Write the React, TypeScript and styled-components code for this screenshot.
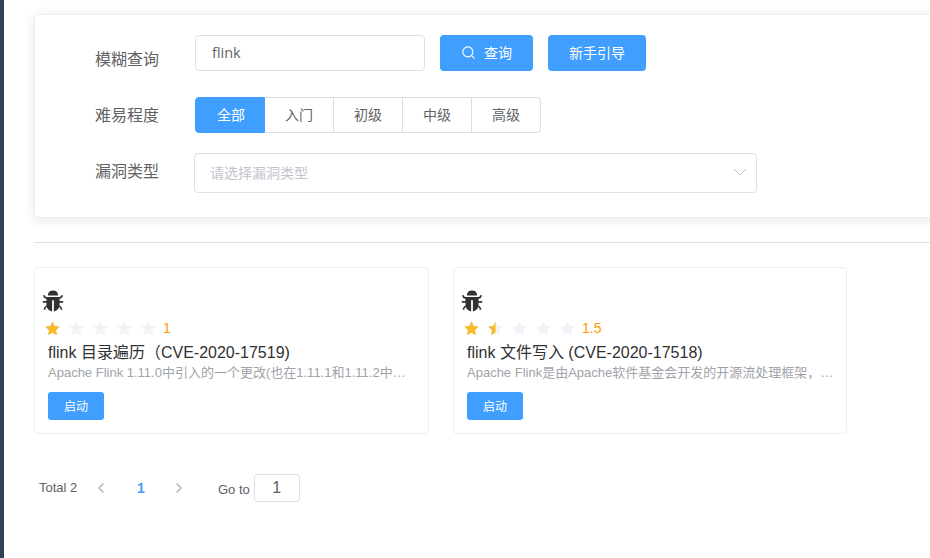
import React from "react";
import styled, { createGlobalStyle } from "styled-components";
import { AiFillBug } from "react-icons/ai";
import { ChevronDown, ChevronLeft, ChevronRight, Search } from "lucide-react";

const Global = createGlobalStyle`
  html, body { margin: 0; padding: 0; height: 100%; overflow: hidden; background: #fff; }
  body { font-family: "Liberation Sans", "Noto Sans CJK SC", sans-serif; }
  #root { height: 100%; }
`;
const Page = styled.div`display: flex; height: 558px; width: 930px; overflow: hidden;`;
const Side = styled.div`flex: 0 0 4px; background: #304156;`;
const Main = styled.main`flex: 1 0 0; min-width: 0; padding: 14px 0 0 30px;`;
const SearchCard = styled.section`
  width: 1000px; height: 204px; box-sizing: border-box; background: #fff;
  border: 1px solid #ebeef5; border-radius: 4px; box-shadow: 0 2px 12px rgba(0,0,0,.1);
  padding: 20px 0 0 60px;
`;
const Row = styled.div<{ $h: number; $mb: number }>`
  display: flex; align-items: flex-start; height: ${p => p.$h}px; margin-bottom: ${p => p.$mb}px;
`;
const Label = styled.label<{ $top: number }>`
  flex: 0 0 100px; box-sizing: border-box; padding-top: ${p => p.$top}px; font-size: 16px; line-height: 24px; color: #606266;
`;
const TextInput = styled.div`
  width: 230px; height: 36px; box-sizing: border-box; border: 1px solid #dcdfe6; border-radius: 4px;
  font: 14.5px/34px "Open Sans", "Noto Sans CJK SC", sans-serif; color: #606266; padding-left: 16px; margin-right: 15px;
`;
const Primary = styled.button<{ $w: number }>`
  display: flex; align-items: center; justify-content: center; gap: 8px; width: ${p => p.$w}px; height: 36px;
  padding: 0 0 2px; border: 0; border-radius: 4px; background: #409eff; color: #fff; font: 14px "Noto Sans CJK SC", sans-serif; margin-right: 15px;
`;
const Radios = styled.div`display: flex; height: 36px;`;
const Radio = styled.div<{ $active?: boolean }>`
  width: 69px; box-sizing: border-box; display: flex; align-items: center; justify-content: center;
  font: 14px "Noto Sans CJK SC", sans-serif; height: 36px; padding-bottom: 2px;
  background: ${p => p.$active ? "#409eff" : "#fff"}; color: ${p => p.$active ? "#fff" : "#606266"};
  border: 1px solid ${p => p.$active ? "#409eff" : "#dcdfe6"}; border-left-width: ${p => p.$active ? 1 : 0}px;
  &:first-child { width: 70px; border-radius: 4px 0 0 4px; padding-left: 2px; }
  &:last-child { border-radius: 0 4px 4px 0; }
`;
const Select = styled.div`
  width: 563px; height: 40px; box-sizing: border-box; margin-left: -1px; border: 1px solid #dcdfe6; border-radius: 4px;
  display: flex; align-items: center; justify-content: space-between; padding: 0 4px 2px 15px;
  font: 14px "Noto Sans CJK SC", sans-serif; color: #c0c4cc;
`;
const Divider = styled.hr`width: 896px; height: 1px; border: 0; background: #dcdfe6; margin: 24px 0 24px;`;
const Cards = styled.div`display: flex; gap: 24px;`;
const Card = styled.article`
  width: 395px; height: 167px; box-sizing: border-box; border: 1px solid #ebeef5; border-radius: 4px; padding: 21px 0 0 13px;
  &:nth-child(2) { width: 394px; }
`;
const BugIcon = styled(AiFillBug)`display: block; font-size: 24px; color: #303133; margin-left: -7px;`;
const Stars = styled.div`display: flex; align-items: center; height: 20px; margin: 5px 0 0 -4.5px;`;
const StarSvg = styled.svg`width: 17px; height: 17px; margin: 0 7px 0 0; display: block;`;
const Score = styled.span`font-size: 14px; color: #ff9900; margin-left: -0.5px;`;
const Title = styled.h3`margin: 4px 0 0; font-size: 16px; font-weight: 400; line-height: 22px; color: #303133; white-space: nowrap;`;
const Desc = styled.p`
  margin: 0; width: 367px; font-size: 13px; line-height: 18px; color: #a0a3a9;
  white-space: nowrap; overflow: hidden; text-overflow: ellipsis;
`;
const Start = styled.button`
  display: block; margin-top: 10px; width: 56px; height: 28px; padding: 0 0 2px; border: 0; border-radius: 3px;
  background: #409eff; color: #fff; font: 12px "Noto Sans CJK SC", sans-serif;
`;
const Pager = styled.nav`display: flex; align-items: center; height: 28px; margin-top: 40px; padding-left: 5px; font-size: 13px; color: #606266;`;
const Total = styled.span`width: 48px; margin-top: -2px;`;
const Arrow = styled.span`display: flex; width: 28px; justify-content: center; color: #b4b8bf;`;
const PageNum = styled.span`width: 50px; box-sizing: border-box; padding-left: 2px; text-align: center; color: #409eff; font-weight: 700; font-size: 14px;`;
const GoTo = styled.span`margin: 2px 4px 0 25px; font-size: 13px;`;
const GoInput = styled.div`
  width: 46px; height: 28px; box-sizing: border-box; border: 1px solid #dcdfe6; border-radius: 3px;
  text-align: center; line-height: 26px; font-size: 16px;
`;

const STAR = "M12 1.8l3.1 6.6 7.2.9-5.3 5 1.4 7.2L12 18l-6.4 3.5L7 14.3l-5.3-5 7.2-.9z";
const Star = ({ fill, id }: { fill: number; id: string }) => (
  <StarSvg viewBox="0 0 24 24">
    <path d={STAR} fill="#eff2f7" />
    {fill > 0 && (
      <>
        <clipPath id={id}><rect x="0" y="0" width={24 * fill} height="24" /></clipPath>
        <path d={STAR} fill="#f7ba2a" clipPath={`url(#${id})`} />
      </>
    )}
  </StarSvg>
);
const Rate = ({ v, id }: { v: number; id: string }) => (
  <Stars>
    {[0, 1, 2, 3, 4].map(i => <Star key={i} id={`${id}${i}`} fill={Math.max(0, Math.min(1, v - i))} />)}
    <Score>{v}</Score>
  </Stars>
);
const items = [
  { t: "flink 目录遍历（CVE-2020-17519)", d: "Apache Flink 1.11.0中引入的一个更改(也在1.11.1和1.11.2中发布)允许攻击者读取任意文件", v: 1 },
  { t: "flink 文件写入 (CVE-2020-17518)", d: "Apache Flink是由Apache软件基金会开发的开源流处理框架，其核心是用Java和Scala编写", v: 1.5 },
];

export default function App() {
  return (
    <Page>
      <Global />
      <Side />
      <Main>
        <SearchCard>
          <Row $h={36} $mb={26}>
            <Label $top={13}>模糊查询</Label>
            <TextInput>flink</TextInput>
            <Primary $w={93}><Search size={15} strokeWidth={1.8} />查询</Primary>
            <Primary $w={98}>新手引导</Primary>
          </Row>
          <Row $h={36} $mb={20}>
            <Label $top={7}>难易程度</Label>
            <Radios>
              <Radio $active>全部</Radio><Radio>入门</Radio><Radio>初级</Radio><Radio>中级</Radio><Radio>高级</Radio>
            </Radios>
          </Row>
          <Row $h={40} $mb={0}>
            <Label $top={7}>漏洞类型</Label>
            <Select>请选择漏洞类型<ChevronDown size={24} strokeWidth={1} /></Select>
          </Row>
        </SearchCard>
        <Divider />
        <Cards>
          {items.map((it, n) => (
            <Card key={n}>
              <BugIcon />
              <Rate v={it.v} id={`s${n}`} />
              <Title>{it.t}</Title>
              <Desc>{it.d}</Desc>
              <Start>启动</Start>
            </Card>
          ))}
        </Cards>
        <Pager>
          <Total>Total 2</Total>
          <Arrow><ChevronLeft size={16} strokeWidth={2.4} /></Arrow>
          <PageNum>1</PageNum>
          <Arrow><ChevronRight size={16} strokeWidth={2.4} /></Arrow>
          <GoTo>Go to</GoTo>
          <GoInput>1</GoInput>
        </Pager>
      </Main>
    </Page>
  );
}
